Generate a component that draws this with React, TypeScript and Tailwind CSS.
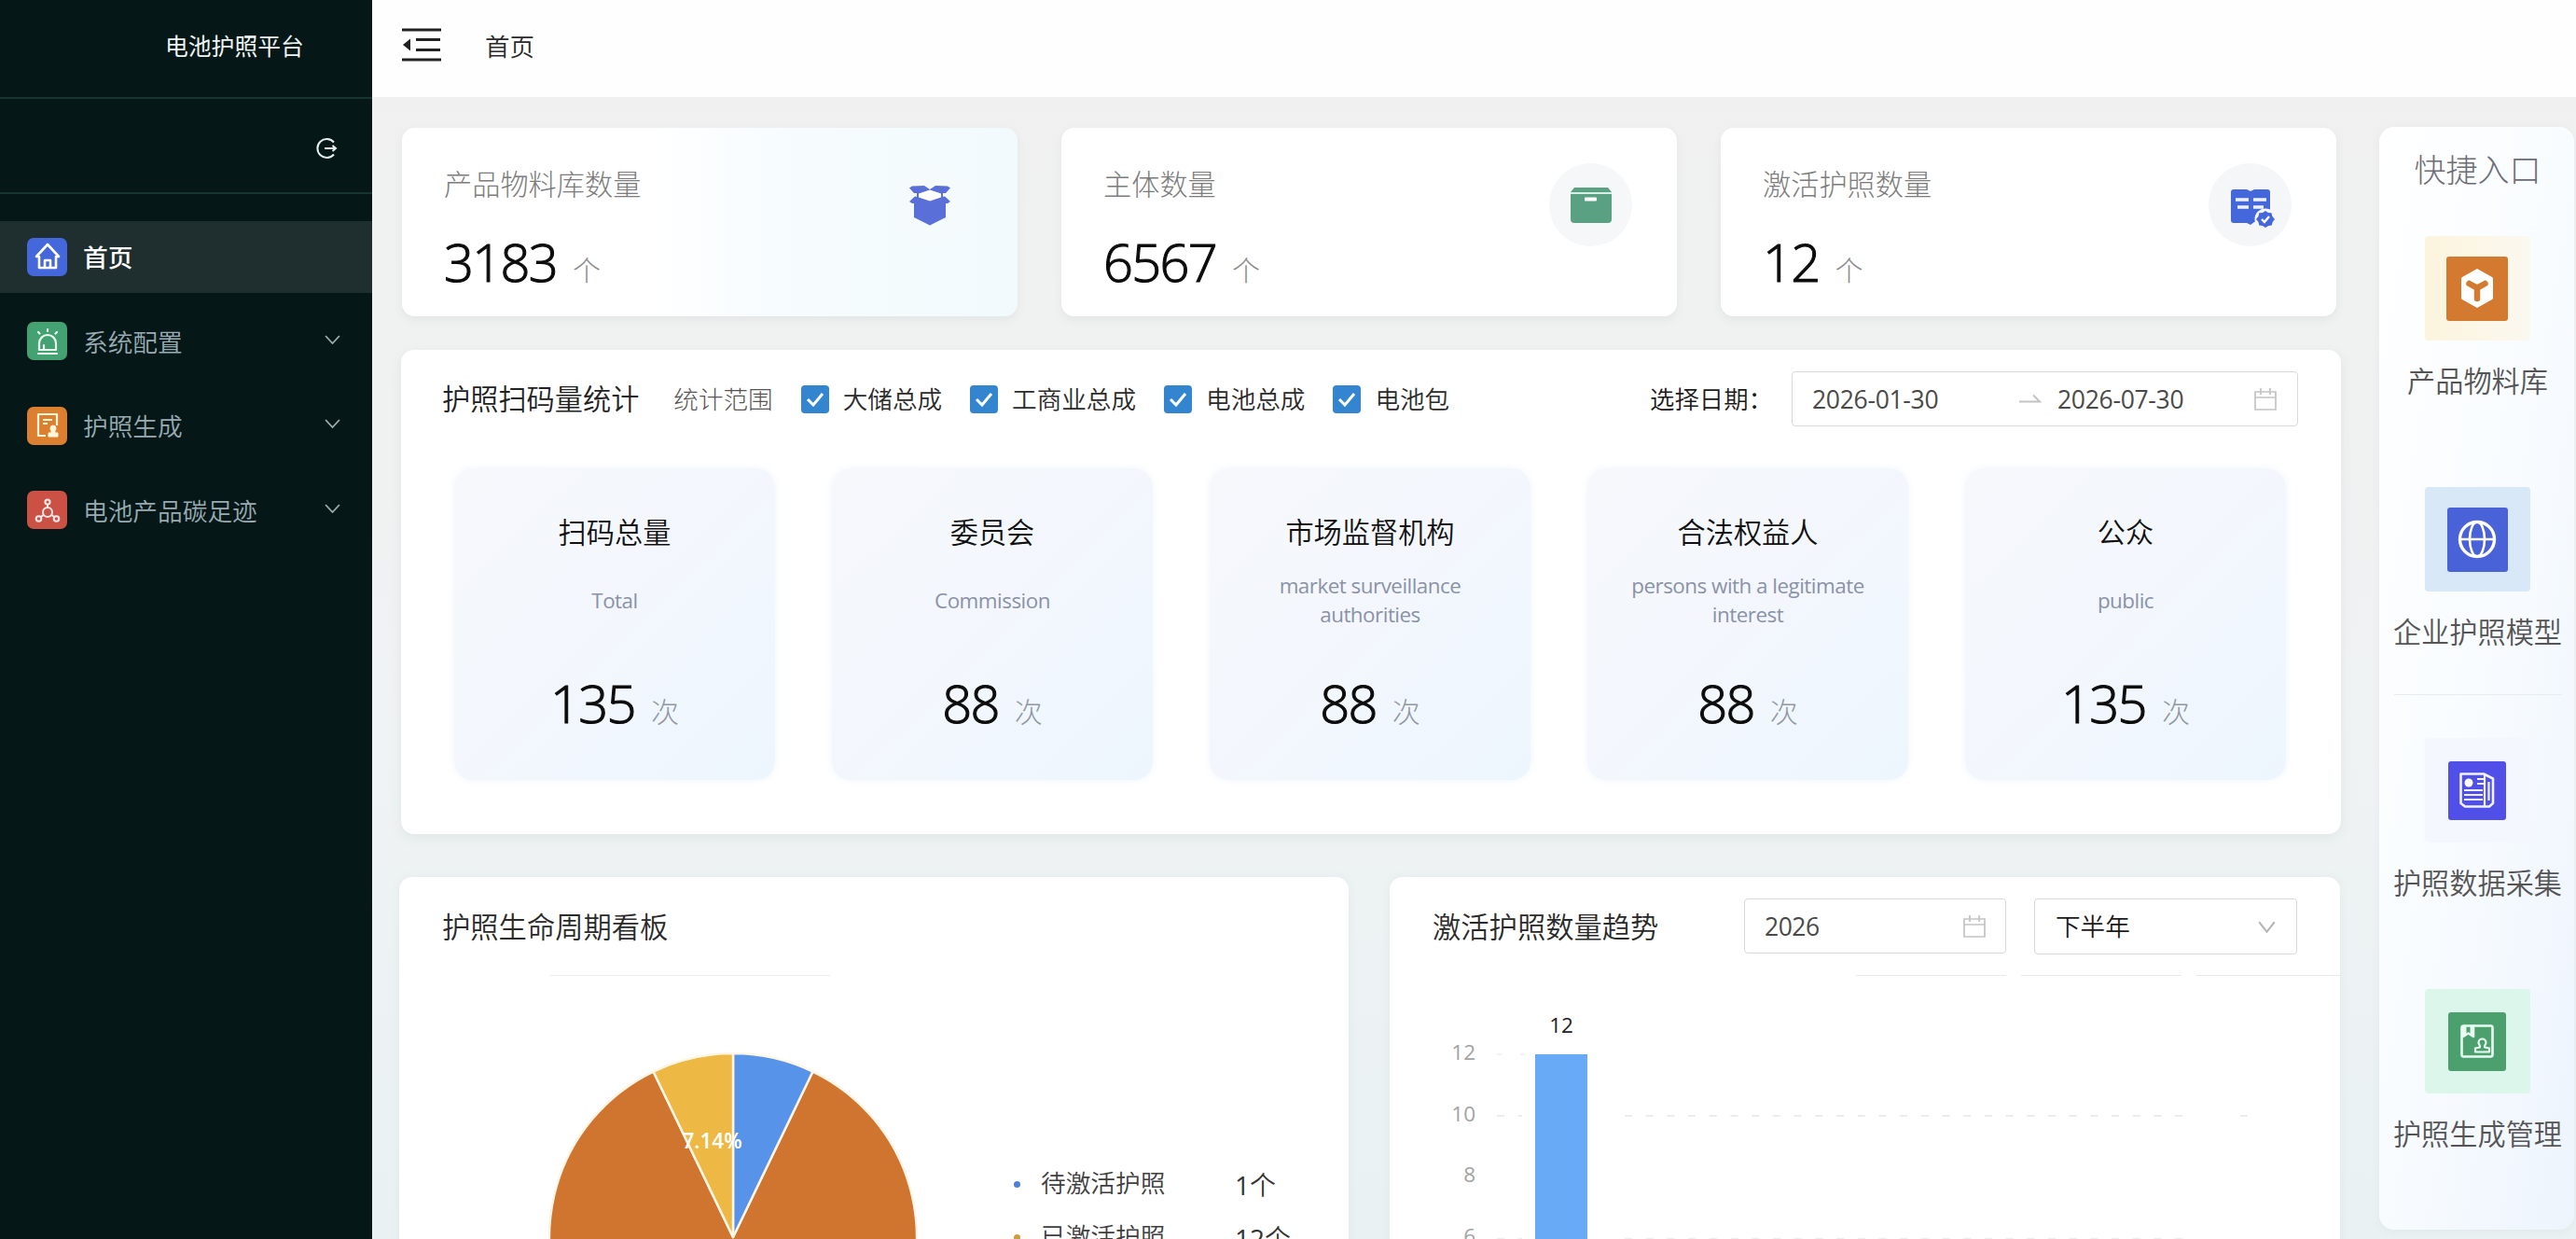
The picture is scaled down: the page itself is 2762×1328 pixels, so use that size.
import React from "react";

const font =
  'font-["Open_Sans","Noto_Sans_CJK_SC",sans-serif]';

/* ---------- sidebar ---------- */

function HomeIcon() {
  return (
    <svg viewBox="0 0 28 32" className="h-8 w-7" fill="none" stroke="#fff" strokeWidth="2.6" strokeLinejoin="round">
      <path d="M2 16 14 3l12 13h-3v12H5V16Z" />
      <path d="M11 28v-8h6v8" />
    </svg>
  );
}

function AlarmIcon() {
  return (
    <svg viewBox="0 0 28 32" className="h-8 w-7" fill="none" stroke="#eafff2" strokeWidth="2.2" strokeLinecap="round">
      <path d="M5 25v-7a9 9 0 0 1 18 0v7Z" strokeLinejoin="round" />
      <path d="M4 29h20M10 24v-4M14 3v2M4 6l1.500 1.500M24 6l-1.500 1.500" />
    </svg>
  );
}

function DocStampIcon() {
  return (
    <svg viewBox="0 0 28 32" className="h-8 w-7" fill="none" stroke="#fff6dc" strokeWidth="2.2" strokeLinejoin="round">
      <path d="M12 27H4V4h20v12" />
      <path d="M9 10h10M9 14h5" />
      <path d="M15 28h10v-4h-3c-.6-2 1-3 1-5a3 3 0 0 0-6 0c0 2 1.600 3 1 5h-3Z" fill="#fff6dc" strokeWidth="1" />
    </svg>
  );
}

function MoleculeIcon() {
  return (
    <svg viewBox="0 0 28 32" className="h-8 w-7" fill="none" stroke="#ffe9ea" strokeWidth="2">
      <circle cx="14" cy="18" r="5" />
      <circle cx="14" cy="7" r="2.600" />
      <circle cx="4.500" cy="25" r="2.800" />
      <circle cx="23.500" cy="25" r="2.800" />
      <path d="M14 10v3M9.500 21l-2.500 2M18.500 21l2.500 2" />
    </svg>
  );
}

function ChevronDown({ className }: { className: string }) {
  return (
    <svg viewBox="0 0 16 10" className={className} fill="none" stroke="currentColor" preserveAspectRatio="none">
      <path d="M1 1l7 8 7-8" strokeWidth="1.7" />
    </svg>
  );
}

function SideItem({
  icon,
  tile,
  label,
  active = false,
}: {
  icon: React.ReactNode;
  tile: string;
  label: string;
  active?: boolean;
}) {
  return (
    <div className={`mb-[14px] flex h-[76.500px] items-center pl-[29px] pr-[34px] ${active ? "bg-[#1f2e2f]" : ""}`}>
      <div className={`flex h-[41px] w-[43px] items-center justify-center rounded-[7px] ${tile}`}>{icon}</div>
      <span
        className={`ml-[17px] mt-[2px] text-[26.700px] leading-[40px] ${active ? "font-medium text-white" : "font-[350] text-[#98abb2]"}`}
      >
        {label}
      </span>
      {!active && <ChevronDown className="mb-1 ml-auto h-[10px] w-[17px] text-[#9dabad]" />}
    </div>
  );
}

function Sidebar() {
  return (
    <aside className="flex h-full w-[399px] shrink-0 flex-col bg-[#051716]">
      <div className="flex h-[106px] items-center border-b-2 border-[#173431] pb-[5px] pl-[177px] text-[24.800px] text-[#eef4f3]">
        电池护照平台
      </div>
      <div className="flex h-[102px] items-center justify-end border-b-2 border-[#173431] pr-[37px] pt-[5px]">
        <svg viewBox="0 0 24 24" className="h-6 w-6" fill="none" stroke="#e6eeee" strokeWidth="2">
          <path d="M20 5.500a10 10 0 1 0 0 13" />
          <path d="M10 12h11M18.500 9l3.500 3-3.500 3" />
        </svg>
      </div>
      <nav className="mt-[29px]">
        <SideItem icon={<HomeIcon />} tile="bg-[#4468dc]" label="首页" active />
        <SideItem icon={<AlarmIcon />} tile="bg-[#43a172]" label="系统配置" />
        <SideItem icon={<DocStampIcon />} tile="bg-[#dc8030]" label="护照生成" />
        <SideItem icon={<MoleculeIcon />} tile="bg-[#cb5145]" label="电池产品碳足迹" />
      </nav>
    </aside>
  );
}

/* ---------- summary cards ---------- */

function OpenBoxIcon() {
  return (
    <svg viewBox="0 0 44 44" className="mr-[4px] h-11 w-11" fill="#5a6fd8">
      <path d="M3 1.500 16 1l6 4 6-4 13 .5 3 2-5 5.500H31l-9-3-9 3H5L0 3.500Z" />
      <path d="M8 8h3v6H8ZM33 8h3v6h-3Z" />
      <path d="M6 12.500 22 16l16-3.500 6 5.500-3 2h-2v15L22 43.500 5 35V20H3l-3-2Z" />
      <path d="M22 5.500 34 9.500v4L22 17.500l-12-4v-4Z" fill="#fff" />
    </svg>
  );
}

function ArchiveIcon() {
  return (
    <svg viewBox="0 0 44 38" className="h-[38px] w-11" fill="#5aa184">
      <path d="M4 0h36l4 5H0Z" />
      <path d="M0 7h44v27a4 4 0 0 1-4 4H4a4 4 0 0 1-4-4Z" />
      <path d="M0 5h44v2H0Z" fill="#d6efe4" />
      <rect x="15" y="10.500" width="13" height="4" rx="1" fill="#fff" />
    </svg>
  );
}

function BookCheckIcon() {
  return (
    <svg viewBox="0 0 48 42" className="ml-[4px] mt-[6px] h-[42px] w-12" fill="#4468dc">
      <path d="M4 1h14l4 2 4-2h14a3 3 0 0 1 3 3v32H26l-4 3-4-2H4a3 3 0 0 1-3-3V4a3 3 0 0 1 3-3Z" />
      <path d="M6 12h14M25 12h14M8 20h12M25 20h11" stroke="#eef2ff" strokeWidth="3.400" />
      <circle cx="38" cy="33" r="11.500" fill="#f5f6f8" />
      <path d="M38 24l3 2 3.500.3.800 3.500L48 33l-2.400 3-.8 3.600-3.600.4L38 42l-3-2-3.700-.4-.8-3.600L28 33l2.500-3.200.8-3.500 3.700-.3Z" />
      <path d="M34 33l3 3 5-6" stroke="#fff" strokeWidth="2.400" fill="none" />
    </svg>
  );
}

function SummaryCard({
  title,
  value,
  icon,
  bg,
  disc,
}: {
  title: string;
  value: string;
  icon: React.ReactNode;
  bg: string;
  disc: string;
}) {
  return (
    <section className={`flex h-[202px] w-[660px] justify-between rounded-[14px] pl-[45px] pr-[48px] shadow-[0_4px_10px_rgba(90,110,110,0.08)] ${bg}`}>
      <div>
        <div className="mt-[39px] text-[30.200px] font-light leading-[44px] text-[#7c7c7c]">{title}</div>
        <div className="mt-[25px] flex h-[70px] items-center">
          <span className="text-[56px] font-light leading-[70px] tracking-[-1.700px] text-[#0c0c0c] [-webkit-text-stroke:1.100px_#0c0c0c]">{value}</span>
          <span className="ml-[17px] mt-[19px] text-[30px] font-light leading-[40px] text-[#8c8c8c]">个</span>
        </div>
      </div>
      <div className={`mt-[38px] flex h-[89px] w-[89px] items-center justify-center rounded-full ${disc}`}>{icon}</div>
    </section>
  );
}

/* ---------- scan statistics ---------- */

function Checkbox({ label }: { label: string }) {
  return (
    <label className="mr-[30px] flex items-center">
      <span className="flex h-[30px] w-[30px] items-center justify-center rounded-[4px] bg-[#3385cf]">
        <svg viewBox="0 0 20 16" className="h-4 w-5" fill="none" stroke="#fff" strokeWidth="3">
          <path d="M2 8l6 6L18 2" />
        </svg>
      </span>
      <span className="ml-[15px] text-[26.600px] font-[350] leading-[40px] text-[#2b2b2b]">{label}</span>
    </label>
  );
}

function CalendarIcon() {
  return (
    <svg viewBox="0 0 26 24" className="h-6 w-[26px]" fill="none" stroke="#c4c4c4" strokeWidth="1.700">
      <path d="M2 4h22v19H2ZM2 10h22M8 0v7M18 0v7" />
    </svg>
  );
}

function StatCard({ title, sub, value }: { title: string; sub: string[]; value: string }) {
  return (
    <div className="flex h-[334px] w-[344px] flex-col items-center rounded-[20px] bg-linear-to-br from-[#f6f8fc] via-[#f3f7fd] to-[#edf6fe] shadow-[0_0_10px_rgba(240,245,252,1)]">
      <div className="mt-[47px] text-[30.200px] font-[350] leading-[44px] text-[#111]">{title}</div>
      <div className="mt-[18px] flex h-[64px] flex-col justify-center text-center text-[22.400px] leading-[31px] tracking-[-0.500px] text-[#8a92a8]">
        {sub.map((s) => (
          <div key={s}>{s}</div>
        ))}
      </div>
      <div className="mt-[43px] flex h-[70px] items-center">
        <span className="text-[56px] font-light leading-[70px] tracking-[-1.700px] text-[#0c0c0c] [-webkit-text-stroke:1.100px_#0c0c0c]">{value}</span>
        <span className="ml-[17px] mt-[20px] text-[30px] font-light leading-[40px] text-[#9097a3]">次</span>
      </div>
    </div>
  );
}

const stats = [
  { title: "扫码总量", sub: ["Total"], value: "135" },
  { title: "委员会", sub: ["Commission"], value: "88" },
  { title: "市场监督机构", sub: ["market surveillance", "authorities"], value: "88" },
  { title: "合法权益人", sub: ["persons with a legitimate", "interest"], value: "88" },
  { title: "公众", sub: ["public"], value: "135" },
];

function ScanPanel() {
  return (
    <section className="ml-[2px] mt-[36px] h-[519px] rounded-[14px] bg-white pt-[23px] shadow-[0_4px_14px_rgba(90,110,110,0.09)]">
      <div className="flex h-[59px] items-center pl-[44px] pr-[46px]">
        <h2 className="text-[30.200px] font-[350] leading-[44px] text-[#222]">护照扫码量统计</h2>
        <span className="ml-[37px] mr-[30px] text-[26.600px] font-light leading-[40px] text-[#555]">统计范围</span>
        <Checkbox label="大储总成" />
        <Checkbox label="工商业总成" />
        <Checkbox label="电池总成" />
        <Checkbox label="电池包" />
        <span className="ml-auto mr-[20px] text-[26.400px] font-[350] leading-[40px] text-[#1a1a1a]">选择日期：</span>
        <div className="flex h-[59px] w-[543px] items-center rounded-[4px] border border-[#d9d9d9] px-[21px] text-[26.500px] leading-[40px] tracking-[-0.300px] text-[#4a4a4a]">
          <span className="w-[222px]">2026-01-30</span>
          <svg viewBox="0 0 24 12" className="h-3 w-6" fill="none" stroke="#c4c4c4" strokeWidth="2">
            <path d="M0 8.500h22l-7-7" />
          </svg>
          <span className="ml-[17px]">2026-07-30</span>
          <span className="ml-auto">
            <CalendarIcon />
          </span>
        </div>
      </div>
      <div className="mt-[45px] flex justify-between pl-[57px] pr-[59px]">
        {stats.map((s) => (
          <StatCard key={s.title} {...s} />
        ))}
      </div>
    </section>
  );
}

/* ---------- lifecycle pie ---------- */

function slice(a0: number, a1: number, r: number) {
  const p = (a: number) => `${(r * Math.sin(a)).toFixed(2)} ${(-r * Math.cos(a)).toFixed(2)}`;
  return `M0 0L${p(a0)}A${r} ${r} 0 ${a1 - a0 > Math.PI ? 1 : 0} 1 ${p(a1)}Z`;
}

function LegendRow({ dot, label, value }: { dot: string; label: string; value: string }) {
  return (
    <div className="flex h-[57px] items-center">
      <span className={`mt-1 h-[7px] w-[7px] rounded-full ${dot}`} />
      <span className="ml-[22px] w-[208px] text-[26.700px] font-[350] leading-[40px] text-[#3f3f3f]">{label}</span>
      <span className="mt-1 text-[28px] leading-[40px] text-[#333]">
        {value}
        <span className="font-[350]">个</span>
      </span>
    </div>
  );
}

function LifecyclePanel() {
  const t = (Math.PI * 2) / 14;
  return (
    <section className="h-[420px] w-[1018px] rounded-t-[14px] bg-white shadow-[0_0_12px_rgba(90,110,110,0.06)]">
      <h2 className="pl-[46px] pt-[32px] text-[30.300px] font-[350] leading-[44px] text-[#2a2a2a]">护照生命周期看板</h2>
      <div className="ml-[161px] mt-[29px] h-px w-[301px] bg-[#ececec]" />
      <div className="flex">
        <svg viewBox="-200 -200 400 400" className="ml-[158px] mt-[80px] h-[400px] w-[400px]">
          <g stroke="#fff6e6" strokeWidth="2.500" strokeLinejoin="round">
            <path d={slice(t, 13 * t, 197)} fill="#d0752f" />
            <path d={slice(0, t, 197)} fill="#5793e8" />
            <path d={slice(13 * t, 14 * t, 197)} fill="#edb843" />
          </g>
          <text x="-22.500" y="-95" textAnchor="middle" fill="#fff" fontSize="22.500" fontWeight="600">
            7.14%
          </text>
        </svg>
        <div className="ml-[101px] mt-[193px]">
          <LegendRow dot="bg-[#4b80dd]" label="待激活护照" value="1" />
          <LegendRow dot="bg-[#d19a3f]" label="已激活护照" value="12" />
        </div>
      </div>
    </section>
  );
}

/* ---------- activation trend ---------- */

function TrendPanel() {
  const ticks = ["12", "10", "8", "6"];
  return (
    <section className="h-[420px] w-[1019px] rounded-t-[14px] bg-white shadow-[0_0_12px_rgba(90,110,110,0.06)]">
      <div className="flex h-[105px] items-start pl-[46px] pt-[23px]">
        <h2 className="mt-[9px] w-[334px] text-[30.300px] font-[350] leading-[44px] text-[#2a2a2a]">激活护照数量趋势</h2>
        <div className="flex h-[59px] w-[281px] items-center justify-between rounded-[4px] border border-[#d9d9d9] pl-[21px] pr-[20px]">
          <span className="text-[26.500px] leading-[40px] tracking-[-0.500px] text-[#4a4a4a]">2026</span>
          <CalendarIcon />
        </div>
        <div className="ml-[30px] flex h-[60px] w-[282px] items-center justify-between rounded-[4px] border border-[#d9d9d9] pl-[22px] pr-[22px]">
          <span className="text-[26.600px] font-[350] leading-[40px] text-[#1a1a1a]">下半年</span>
          <ChevronDown className="h-[13px] w-[19px] text-[#b5b5b5]" />
        </div>
      </div>
      <div className="ml-auto flex w-[519px] gap-[16px]">
        <div className="h-px w-[161px] bg-[#e9e9e9]" />
        <div className="h-px w-[172px] bg-[#e9e9e9]" />
        <div className="h-px flex-1 bg-[#e9e9e9]" />
      </div>
      <svg viewBox="1490 1046 1019 314" className="h-[314px] w-[1019px]">
        <path d="M1605 1196H1632M1742 1196H2350M2402 1196H2414" stroke="#e6e6e6" strokeWidth="1.500" strokeDasharray="8 14.700" />
        <path d="M1605 1130H1640" stroke="#eeeeee" strokeWidth="1.500" strokeDasharray="5 20" />
        <path d="M1605 1327.500H1632M1742 1327.500H2350" stroke="#efefef" strokeWidth="1.500" strokeDasharray="8 14.700" />
        <rect x="1646" y="1130" width="56" height="230" fill="#69aaf6" />
        <g fontSize="22.500">
          <text x="1674" y="1107" textAnchor="middle" fill="#222">
            12
          </text>
          {ticks.map((v, i) => (
            <text key={v} x="1582" y={1136 + i * 65.5} textAnchor="end" fill="#a3a3a3">
              {v}
            </text>
          ))}
        </g>
      </svg>
    </section>
  );
}

/* ---------- quick entry ---------- */

function HexIcon() {
  return (
    <svg viewBox="0 0 36 44" className="h-11 w-9" fill="#fff">
      <path d="M18 1l16 9q1 .6 1 2v20q0 1.400-1 2l-16 9-16-9q-1-.6-1-2V12q0-1.400 1-2Z" />
      <path d="M9.500 17l8.500 4.500L26.500 17M18 21v12" fill="none" stroke="#d37a30" strokeWidth="6.500" strokeLinecap="round" />
    </svg>
  );
}

function GlobeIcon() {
  return (
    <svg viewBox="0 0 42 44" className="h-11 w-[42px]" fill="none" stroke="#fff" strokeWidth="2.600">
      <circle cx="21" cy="22" r="18.500" strokeWidth="3.400" />
      <ellipse cx="21" cy="22" rx="8" ry="18.500" />
      <path d="M2 22h38" />
    </svg>
  );
}

function NewsIcon() {
  return (
    <svg viewBox="0 0 38 38" className="h-[38px] w-[38px]" fill="none" stroke="#f1f1ff" strokeWidth="2.600" strokeLinejoin="round">
      <path d="M1.500 1.500H26l10 5V33l-4 3.500H6L1.500 33Z" />
      <path d="M27 2v34M31.500 10v20M5 19h20M5 24h20M5 29h20M19 7h7M19 12h7" strokeWidth="2.200" />
      <circle cx="10" cy="11" r="4.500" fill="#fff" stroke="none" />
    </svg>
  );
}

function BookmarkUserIcon() {
  return (
    <svg viewBox="0 0 36 36" className="h-9 w-9" fill="none" stroke="#e9fff3" strokeWidth="2.600" strokeLinejoin="round">
      <rect x="1.500" y="1.500" width="33" height="33" rx="2" />
      <path d="M3 2v11l5.500-3.500L14 13V2" />
      <path d="M3 2h3v8l-3 3ZM11 2h3v11l-3-3Z" fill="#e9fff3" strokeWidth="1" />
      <path d="M16 29.500h15v-4l-5-1c-.6-2 1.500-3 1.500-5a4 4 0 0 0-8 0c0 2 2 3 1.500 5l-5 1Z" strokeWidth="2.200" />
    </svg>
  );
}

function QuickEntry({
  icon,
  outer,
  inner,
  label,
  className,
}: {
  icon: React.ReactNode;
  outer: string;
  inner: string;
  label: string;
  className: string;
}) {
  return (
    <div className={`flex flex-col items-center ${className}`}>
      <div className={`flex h-[112px] w-[113px] items-center justify-center rounded-[4px] ${outer}`}>
        <div className={`flex items-center justify-center rounded-[3px] ${inner}`}>{icon}</div>
      </div>
      <div className="mt-[22px] whitespace-nowrap text-[30.200px] font-[350] leading-[44px] text-[#555]">{label}</div>
    </div>
  );
}

function QuickPanel() {
  return (
    <aside className="mt-[32px] flex h-[1182px] w-[209px] flex-col items-center rounded-[16px] bg-linear-to-br from-white via-[#f8fcff] to-[#eef4fd] pl-[2px] shadow-[0_2px_10px_rgba(90,110,110,0.06)]">
      <h2 className="mt-[21px] text-[34px] font-light leading-[50px] text-[#6c6c74]">快捷入口</h2>
      <QuickEntry className="mt-[46px]" icon={<HexIcon />} outer="bg-linear-to-r from-[#fcf4dd] to-[#fbf8f0]" inner="h-[69px] w-[66px] bg-[#d37a30]" label="产品物料库" />
      <QuickEntry className="mt-[91px]" icon={<GlobeIcon />} outer="bg-[#d8e8f6]" inner="h-[69px] w-[65px] bg-[#4a62d8]" label="企业护照模型" />
      <div className="mt-[44px] h-px w-[180px] bg-[#e7ecf1]" />
      <QuickEntry className="mt-[46px]" icon={<NewsIcon />} outer="bg-[#f5f7fe]" inner="h-[63px] w-[62px] bg-[#5050e8]" label="护照数据采集" />
      <QuickEntry className="mt-[91px]" icon={<BookmarkUserIcon />} outer="bg-[#dcf6ec]" inner="h-[63px] w-[62px] bg-[#4ba06d]" label="护照生成管理" />
    </aside>
  );
}

/* ---------- page ---------- */

export default function App() {
  return (
    <div className={`flex h-[1328px] w-[2762px] overflow-hidden bg-white ${font}`}>
      <Sidebar />
      <div className="flex min-w-0 flex-1 flex-col">
        <header className="flex h-[104px] shrink-0 items-center bg-[#fefefe] pb-[8px] pl-[32px]">
          <svg viewBox="0 0 42 36" className="h-9 w-[42px]" fill="none" stroke="#222" strokeWidth="2.800">
            <path d="M0 2h42M15 12.500h26M15 23.500h26M0 34h42" />
            <path d="M1 18l8-6.500v13Z" fill="#222" stroke="none" />
          </svg>
          <span className="ml-[47px] mt-1 text-[26.600px] font-[350] leading-[40px] text-[#2a2a2a]">首页</span>
        </header>
        <div className="flex flex-1 bg-linear-to-b from-[#f0f0f0] via-[#f0f3f3] to-[#e9f1f3] pl-[29px]">
          <main className="w-[2082px] shrink-0 pt-[33px]">
            <div className="flex justify-between pl-[3px] pr-[5px]">
              <SummaryCard title="产品物料库数量" value="3183" icon={<OpenBoxIcon />} bg="bg-linear-to-r from-white from-40% via-[#f7fcfe] via-60% to-[#f1fafd]" disc="bg-[#f5fafd]" />
              <SummaryCard title="主体数量" value="6567" icon={<ArchiveIcon />} bg="bg-white" disc="bg-[#f5f7f8]" />
              <SummaryCard title="激活护照数量" value="12" icon={<BookCheckIcon />} bg="bg-white" disc="bg-[#f5f6f8]" />
            </div>
            <ScanPanel />
            <div className="mt-[46px] flex justify-between pr-px">
              <LifecyclePanel />
              <TrendPanel />
            </div>
          </main>
          <div className="ml-[41px]">
            <QuickPanel />
          </div>
        </div>
      </div>
    </div>
  );
}
